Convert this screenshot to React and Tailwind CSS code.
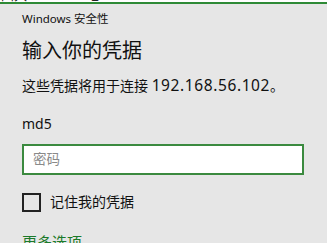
export default function App() {
  return (
    <div className="w-[327px] h-[243px] overflow-hidden bg-[#e6e6e6] text-[#1a1a1a] [font-family:'Noto_Sans','Noto_Sans_CJK_SC',sans-serif]">
      <div className="h-[2px] bg-white overflow-hidden">
        <div className="-mt-[11px] pl-[1px] text-[13px] leading-[13px] text-[#222] flex gap-[60px]">
          <span>四入</span>
          <span>七</span>
        </div>
      </div>
      <div className="h-[2px] bg-[#2e8a36]" />
      <div className="pl-[22px] pr-[23px]">
        <div className="mt-[7px] text-[11.5px] leading-[16px] text-[#111]">Windows 安全性</div>
        <div className="mt-[12px] text-[20px] leading-[24px] text-[#111]">输入你的凭据</div>
        <div className="mt-[12px] text-[14px] leading-[20px] text-[#111]">
          这些凭据将用于连接 <span className="text-[15.5px] tracking-[0.6px]">192.168.56.102</span>。
        </div>
        <div className="mt-[18px] text-[14px] leading-[20px] text-[#111]">md5</div>
        <div className="mt-[10px] h-[31px] w-[282px] border-2 border-[#3b8a3f] bg-white flex items-center pl-[9px] text-[13.5px] text-[#8a8a8a]">密码</div>
        <div className="mt-[17px] flex items-center gap-[9px]">
          <div className="w-[19px] h-[19px] border-2 border-[#222]" />
          <span className="text-[14px] leading-[20px] text-[#111]">记住我的凭据</span>
        </div>
        <div className="mt-[20px] text-[15px] leading-[20px] text-[#1b7a2a]">更多选项</div>
      </div>
    </div>
  );
}
